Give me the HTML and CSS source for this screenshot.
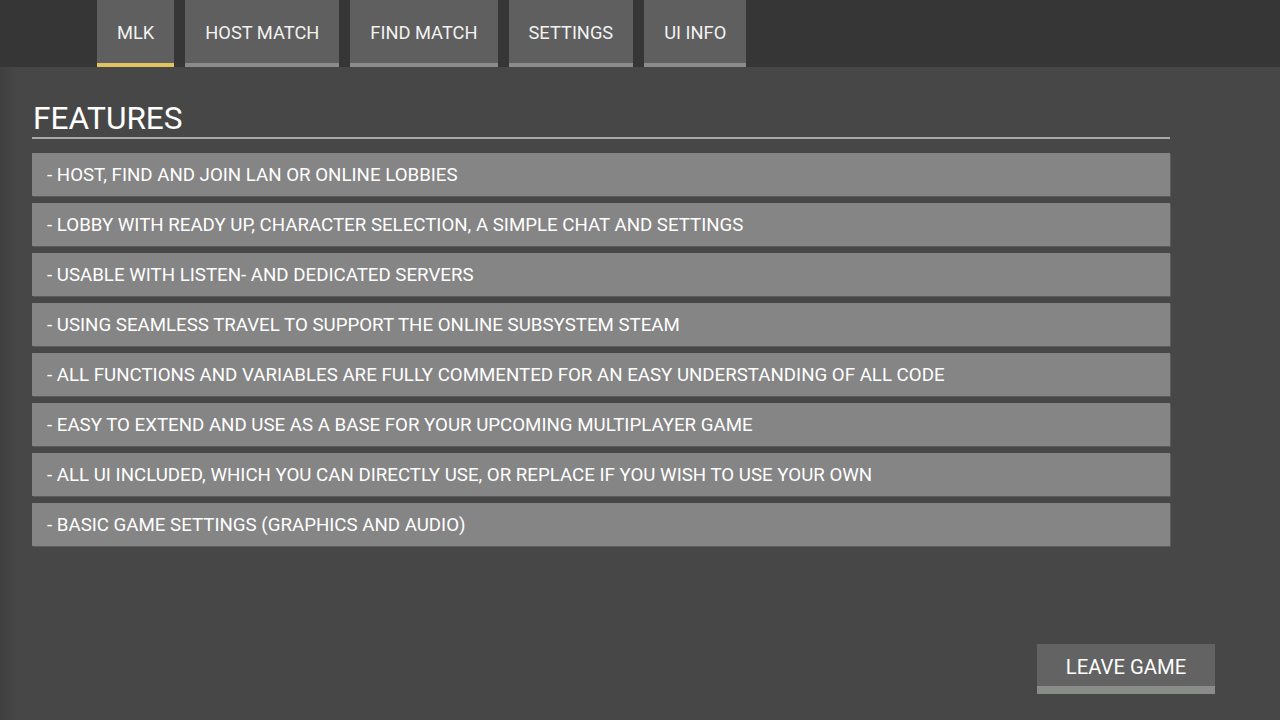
FILE: index.html
```html
<!DOCTYPE html>
<html lang="en">
<head>
  <meta charset="UTF-8" />
  <meta name="viewport" content="width=device-width, initial-scale=1.0"/>
  <title>MLK - UI Info</title>

  <link rel="stylesheet" href="styles.css">
</head>
<body>
  <nav class="tab-bar">
    <div class="tab active">MLK</div>
    <div class="tab">HOST MATCH</div>
    <div class="tab">FIND MATCH</div>
    <div class="tab">SETTINGS</div>
    <div class="tab">UI INFO</div>
  </nav>

  <main class="content">
    <h1 class="section-title">FEATURES</h1>

    <ul class="feature-list">
      <li>- HOST, FIND AND JOIN LAN OR ONLINE LOBBIES</li>
      <li>- LOBBY WITH READY UP, CHARACTER SELECTION, A SIMPLE CHAT AND SETTINGS</li>
      <li>- USABLE WITH LISTEN- AND DEDICATED SERVERS</li>
      <li>- USING SEAMLESS TRAVEL TO SUPPORT THE ONLINE SUBSYSTEM STEAM</li>
      <li>- ALL FUNCTIONS AND VARIABLES ARE FULLY COMMENTED FOR AN EASY UNDERSTANDING OF ALL CODE</li>
      <li>- EASY TO EXTEND AND USE AS A BASE FOR YOUR UPCOMING MULTIPLAYER GAME</li>
      <li>- ALL UI INCLUDED, WHICH YOU CAN DIRECTLY USE, OR REPLACE IF YOU WISH TO USE YOUR OWN</li>
      <li>- BASIC GAME SETTINGS (GRAPHICS AND AUDIO)</li>
    </ul>

    <div class="footer">
      <button class="leave-btn">LEAVE GAME</button>
    </div>
  </main>
</body>
</html>
```

FILE: styles.css
```css
/* Reset */
* {
  margin: 0;
  padding: 0;
  box-sizing: border-box;
}

html,
body {
  height: 100%;
}

body {
  font-family: 'Roboto', 'Liberation Sans', sans-serif;
  background: #474747;
  color: #ffffff;
  display: flex;
  flex-direction: column;
  overflow: hidden;
}

/* Top tabs */
.tab-bar {
  height: 67px;
  background: #363636;
  display: flex;
  gap: 11px;
  padding-left: 97px;
}

.tab {
  background: #5f5f5f;
  border-bottom: 4px solid #8b8b8b;
  padding: 3px 20px 0;
  font-size: 18.3px;
  line-height: 60px;
  color: #f2f2f2;
}

.tab.active {
  border-bottom-color: #e3c35e;
}

/* Main panel */
.content {
  flex: 1;
  display: flex;
  flex-direction: column;
  padding: 33px 110px 26px 32px;
  background: linear-gradient(to right, #3f3f3f 0, #464646 14px, #474747 40px);
}

.section-title {
  font-size: 31.6px;
  font-weight: 400;
  line-height: 36px;
  padding-left: 1px;
  padding-top: 1px;
  border-bottom: 2px solid #a9a9a9;
  margin-bottom: 14px;
}

.feature-list {
  list-style: none;
  display: flex;
  flex-direction: column;
  gap: 7px;
}

.feature-list li {
  height: 43px;
  line-height: 45px;
  background: #858585;
  box-shadow: 1px 1px 0 #5c5c5c;
  padding-left: 15px;
  font-size: 18.7px;
  color: #ffffff;
  overflow: hidden;
}

/* Bottom button */
.footer {
  margin-top: auto;
  display: flex;
  justify-content: flex-end;
  margin-right: -45px;
}

.leave-btn {
  width: 178px;
  height: 50px;
  padding-top: 3px;
  background: #636363;
  border: none;
  border-bottom: 8px solid #8a8c8a;
  color: #ffffff;
  font-family: inherit;
  font-size: 20.3px;
  cursor: pointer;
}
```
